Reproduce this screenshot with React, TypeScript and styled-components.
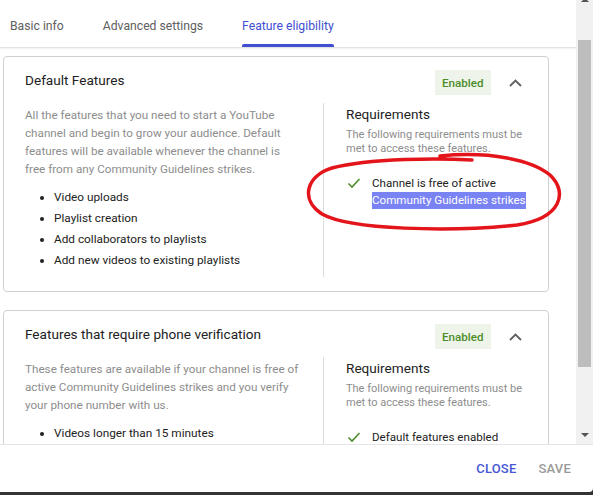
import React from "react";
import styled, { createGlobalStyle } from "styled-components";

const GlobalStyle = createGlobalStyle`
    html, body {
        margin: 0;
        padding: 0;
        background: #333333;
    }
    body {
        font-family: Roboto, "Noto Sans", Arial, sans-serif;
        -webkit-font-smoothing: antialiased;
    }
`;

const Dialog = styled.div`
    width: 593px;
    height: 492px;
    background: #ffffff;
    border-bottom-right-radius: 4px;
    display: flex;
    flex-direction: column;
    overflow: hidden;
`;

const Body = styled.div`
    display: flex;
    height: 444px;
`;

const ScrollArea = styled.div`
    flex: 1;
    min-width: 0;
    overflow: hidden;
    display: flex;
    flex-direction: column;
`;

const TabBar = styled.nav`
    flex: none;
    height: 47px;
    display: flex;
    gap: 39px;
    padding-left: 10px;
    border-bottom: 1px solid #e3e3e3;
    box-shadow: 0 1px 2px rgba(0, 0, 0, 0.06);
`;

const Tab = styled.div<{ $active?: boolean }>`
    position: relative;
    display: flex;
    align-items: center;
    padding-top: 5px;
    font-size: 12.2px;
    color: ${(p) => (p.$active ? "#3f4fd2" : "#606060")};
    &::after {
        content: "";
        display: ${(p) => (p.$active ? "block" : "none")};
        position: absolute;
        left: 0;
        right: 0;
        bottom: 0;
        height: 3px;
        border-radius: 2px 2px 0 0;
        background: #3f4fd2;
    }
`;

const Cards = styled.div`
    display: flex;
    flex-direction: column;
    gap: 18px;
    padding: 8px 27px 0 3px;
`;

const Card = styled.section`
    flex: none;
    border: 1px solid #d0d0d0;
    border-radius: 4px;
    padding: 13px 21px 14px 21px;
`;

const CardHeader = styled.div`
    display: flex;
    align-items: flex-start;
`;

const CardTitle = styled.h3`
    flex: 1;
    margin: 0;
    font-size: 13.6px;
    font-weight: 400;
    line-height: 20px;
    color: #222222;
`;

const Badge = styled.span`
    height: 25px;
    padding: 0 7.5px;
    display: flex;
    align-items: center;
    background: #eff4ea;
    color: #4c8d2b;
    font-size: 11.6px;
    font-weight: 500;
`;

const Toggle = styled.button`
    width: 24px;
    height: 25px;
    margin-left: 12px;
    padding: 0;
    border: none;
    background: none;
    display: flex;
    align-items: center;
    justify-content: center;
`;

const CardBody = styled.div`
    display: flex;
    margin-top: 8px;
`;

const Overview = styled.div`
    width: 278px;
    padding: 3px 20px 6px 0;
`;

const Description = styled.p`
    margin: 0;
    font-size: 11.7px;
    line-height: 18px;
    color: #8d8d8d;
`;

const FeatureList = styled.ul`
    margin: 9px 0 0;
    padding-left: 29px;
    font-size: 11.8px;
    line-height: 21px;
    color: #222222;
`;

const Requirements = styled.div`
    flex: 1;
    border-left: 1px solid #dddddd;
    padding: 1px 0 0 22px;
`;

const ReqTitle = styled.h4`
    margin: 0;
    font-size: 13.6px;
    font-weight: 400;
    line-height: 20px;
    color: #222222;
`;

const ReqNote = styled.p`
    margin: 4px 0 0;
    font-size: 11px;
    line-height: 14px;
    color: #8d8d8d;
`;

const ReqItem = styled.div`
    display: flex;
    margin-top: 19px;
    font-size: 11.6px;
    line-height: 17px;
    color: #222222;
`;

const CheckMark = styled.span`
    width: 25px;
    flex: none;
    padding-left: 1px;
    padding-top: 2px;
`;

const Selected = styled.span`
    background: #7a83f4;
    color: #ffffff;
    padding: 1px 0 2px;
`;

const Scribble = styled.svg`
    position: absolute;
    left: 0;
    top: 0;
    pointer-events: none;
`;

const ScrollTrack = styled.div`
    width: 17px;
    flex: none;
    background: #f1f1f1;
    display: flex;
    flex-direction: column;
    align-items: center;
`;

const ArrowUp = styled.div`
    width: 0;
    height: 0;
    margin-top: -2px;
    border-left: 4px solid transparent;
    border-right: 4px solid transparent;
    border-bottom: 4px solid #555555;
`;

const Thumb = styled.div`
    width: 13px;
    height: 327px;
    margin-top: 38px;
    background: #bdbdbd;
`;

const ArrowDown = styled.div`
    width: 0;
    height: 0;
    margin-top: auto;
    margin-bottom: 7px;
    border-left: 4px solid transparent;
    border-right: 4px solid transparent;
    border-top: 4px solid #555555;
`;

const Footer = styled.footer`
    flex: 1;
    display: flex;
    align-items: center;
    justify-content: flex-end;
    gap: 22px;
    padding-right: 22px;
    border-top: 1px solid #e5e5e5;
`;

const FooterButton = styled.button<{ $primary?: boolean }>`
    border: none;
    background: none;
    padding: 0;
    font-family: inherit;
    font-size: 13px;
    font-weight: 500;
    letter-spacing: 0.2px;
    color: ${(p) => (p.$primary ? "#4657d6" : "#9a9a9a")};
`;

const Check = () => (
    <svg width="14" height="12" viewBox="0 0 14 12">
        <path d="M1.5 6.5 L5 10 L12.5 2" fill="none" stroke="#4c8d2b" strokeWidth="1.6" />
    </svg>
);

const ChevronUp = () => (
    <svg width="13" height="8" viewBox="0 0 13 8">
        <path d="M1 7 L6.5 1.5 L12 7" fill="none" stroke="#606060" strokeWidth="1.8" />
    </svg>
);

interface FeatureCardProps {
    title: string;
    description: string;
    features: string[];
    requirement: React.ReactNode;
}

const FeatureCard: React.FC<FeatureCardProps> = ({ title, description, features, requirement }) => (
    <Card>
        <CardHeader>
            <CardTitle>{title}</CardTitle>
            <Badge>Enabled</Badge>
            <Toggle>
                <ChevronUp />
            </Toggle>
        </CardHeader>
        <CardBody>
            <Overview>
                <Description>{description}</Description>
                <FeatureList>
                    {features.map((f) => (
                        <li key={f}>{f}</li>
                    ))}
                </FeatureList>
            </Overview>
            <Requirements>
                <ReqTitle>Requirements</ReqTitle>
                <ReqNote>
                    The following requirements must be met to access these features.
                </ReqNote>
                <ReqItem>
                    <CheckMark>
                        <Check />
                    </CheckMark>
                    <div>{requirement}</div>
                </ReqItem>
            </Requirements>
        </CardBody>
    </Card>
);

const App: React.FC = () => {
    return (
        <>
            <GlobalStyle />
            <Dialog>
                <Body>
                    <ScrollArea>
                        <TabBar>
                            <Tab>Basic info</Tab>
                            <Tab>Advanced settings</Tab>
                            <Tab $active>Feature eligibility</Tab>
                        </TabBar>
                        <Cards>
                            <FeatureCard
                                title="Default Features"
                                description="All the features that you need to start a YouTube channel and begin to grow your audience. Default features will be available whenever the channel is free from any Community Guidelines strikes."
                                features={[
                                    "Video uploads",
                                    "Playlist creation",
                                    "Add collaborators to playlists",
                                    "Add new videos to existing playlists",
                                ]}
                                requirement={
                                    <>
                                        Channel is free of active
                                        <br />
                                        <Selected>Community Guidelines strikes</Selected>
                                    </>
                                }
                            />
                            <FeatureCard
                                title="Features that require phone verification"
                                description="These features are available if your channel is free of active Community Guidelines strikes and you verify your phone number with us."
                                features={["Videos longer than 15 minutes", "Custom thumbnails", "Live streaming"]}
                                requirement="Default features enabled"
                            />
                        </Cards>
                    </ScrollArea>
                    <ScrollTrack>
                        <ArrowUp />
                        <Thumb />
                        <ArrowDown />
                    </ScrollTrack>
                </Body>
                <Footer>
                    <FooterButton $primary>CLOSE</FooterButton>
                    <FooterButton>SAVE</FooterButton>
                </Footer>
            </Dialog>
            {/* pen mark circling the strike requirement */}
            <Scribble width="593" height="495" viewBox="0 0 593 495">
                <path
                    d="M472 160 C440 158 370 158 332 168 C306 176 300 200 322 214 C350 230 450 232 517 225 C562 218 568 192 550 175 C532 160 490 151 440 156"
                    fill="none"
                    stroke="#e4141b"
                    strokeWidth="3.5"
                    strokeLinecap="round"
                    strokeLinejoin="round"
                />
            </Scribble>
        </>
    );
};

export default App;
